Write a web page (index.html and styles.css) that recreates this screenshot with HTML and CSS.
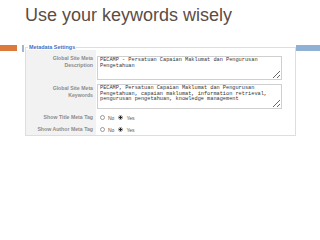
FILE: index.html
```html
<!DOCTYPE html>
<html lang="en">
<head>
	<meta charset="UTF-8">
	<meta name="viewport" content="width=device-width, initial-scale=1.0">
	<title>Use your keywords wisely</title>
	<link rel="stylesheet" href="styles.css">
</head>
<body>
	<h1 class="title">Use your keywords wisely</h1>

	<div class="stage">
		<span class="accent orange"></span>
		<span class="tick"></span>

		<fieldset class="meta">
			<legend>Metadata Settings</legend>
			<div class="grid">
				<label class="label first" for="desc">Global Site Meta<br>Description</label>
				<div class="field first">
					<textarea id="desc" class="box short">PECAMP - Persatuan Capaian Maklumat dan Pengurusan Pengetahuan</textarea>
				</div>

				<label class="label" for="keys">Global Site Meta<br>Keywords</label>
				<div class="field">
					<textarea id="keys" class="box">PECAMP, Persatuan Capaian Maklumat dan Pengurusan Pengetahuan, capaian maklumat, information retrieval, pengurusan pengetahuan, knowledge management</textarea>
				</div>

				<span class="label single">Show Title Meta Tag</span>
				<div class="field radios">
					<input type="radio" name="title" id="titleNo"><label for="titleNo">No</label>
					<input type="radio" name="title" id="titleYes" checked><label for="titleYes">Yes</label>
				</div>

				<span class="label single">Show Author Meta Tag</span>
				<div class="field radios">
					<input type="radio" name="author" id="authorNo"><label for="authorNo">No</label>
					<input type="radio" name="author" id="authorYes" checked><label for="authorYes">Yes</label>
				</div>
			</div>
		</fieldset>

		<span class="accent blue"></span>
	</div>
</body>
</html>
```

FILE: styles.css
```css
body {
	margin: 0;
	background: #fff;
	font-family: "Liberation Sans", Arial, sans-serif;
}

/* Slide heading */
.title {
	margin: 0;
	padding: 5px 0 0 25px;
	font-size: 18px;
	font-weight: normal;
	line-height: 21px;
	color: #5b4c44;
}

/* Row holding the accent bars and the form */
.stage {
	display: flex;
	align-items: flex-start;
	margin-top: 18px;
}

.accent {
	display: block;
	height: 6px;
	margin-top: 1px;
}

.orange {
	width: 17px;
	background-color: #dc7a3b;
}

.blue {
	flex: 1;
	background-color: #8fb1d4;
}

.tick {
	display: block;
	width: 2px;
	height: 7px;
	margin: 1px 1px 0 5px;
	background-color: #a3b6cc;
}

/* The settings box */
.meta {
	width: 271px;
	min-width: 0;
	margin: 0;
	padding: 0;
	box-sizing: border-box;
	border: 1px solid #dedede;
}

.meta legend {
	margin-left: 2px;
	padding: 0 1px;
	font-size: 5.4px;
	line-height: 6px;
	font-weight: bold;
	color: #3d70c6;
}

.grid {
	display: grid;
	grid-template-columns: 70px 1fr;
}

.label {
	background-color: #f2f2f2;
	padding: 3px 3px 0 0;
	text-align: right;
	font-size: 5.2px;
	line-height: 7px;
	font-weight: bold;
	color: #8c8c8c;
}

.label.first {
	padding-top: 5px;
}

.label.single {
	padding-top: 3px;
	height: 9px;
}

.field {
	padding: 2px 0 2px 1px;
}

.field.first {
	padding-top: 6px;
}

.box {
	display: block;
	width: 185px;
	height: 25px;
	margin: 0;
	padding: 1px 2px;
	box-sizing: border-box;
	border: 1px solid #cfcfcf;
	font-family: "Liberation Mono", "Courier New", monospace;
	font-size: 5.25px;
	line-height: 5.6px;
	color: #333;
	overflow: hidden;
}

.box.short {
	height: 24px;
}

/* Radio rows */
.radios {
	display: flex;
	align-items: center;
	height: 12px;
	padding: 0 0 0 4px;
	box-sizing: border-box;
}

.radios input {
	appearance: none;
	-webkit-appearance: none;
	width: 5px;
	height: 5px;
	margin: 0;
	border: 1px solid #999;
	border-radius: 50%;
	box-sizing: border-box;
	background: #fff;
}

.radios input:checked {
	background: radial-gradient(circle, #222 0 1px, #fff 1.3px);
}

.radios label {
	font-size: 5px;
	color: #555;
	margin: 2px 4px 0 3px;
}
```
